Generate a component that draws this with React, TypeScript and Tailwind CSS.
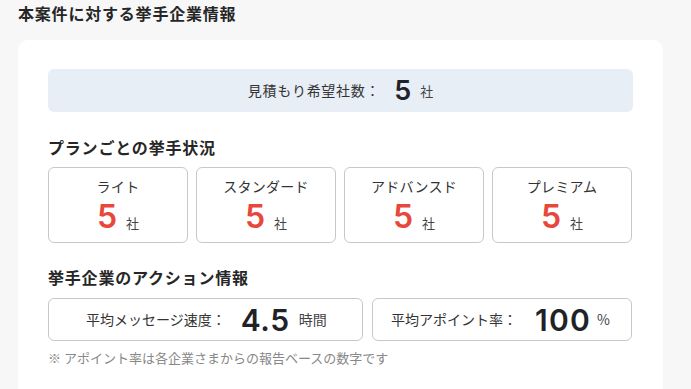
const plans = ["ライト", "スタンダード", "アドバンスド", "プレミアム"];

const jp = "font-['Noto_Sans_CJK_JP','Noto_Sans',sans-serif]";
const num = "font-['Inter','Noto_Sans',sans-serif]";

export default function App() {
  return (
    <div className={`min-h-[389px] bg-[#f7f7f8] pl-[18px] pt-[2px] ${jp}`}>
      <h2 className="text-[16px] leading-[22px] font-bold tracking-[0.05em] text-[#262626]">
        本案件に対する挙手企業情報
      </h2>
      <div className="mt-[16px] w-[645px] rounded-[10px] bg-white px-[30px] pt-[29px] pb-[40px]">
        <div className="flex h-[43px] w-[585px] items-center justify-center rounded-[6px] bg-[#e8eef6]">
          <span className="text-[14px] tracking-[0.05em] text-[#333]">見積もり希望社数：</span>
          <span className={`ml-[14px] text-[27px] leading-none font-semibold text-[#1f2328] ${num}`}>5</span>
          <span className="ml-[9px] text-[13px] text-[#444]">社</span>
        </div>

        <h3 className="mt-[24px] text-[16px] leading-[22px] font-bold tracking-[0.05em] text-[#262626]">
          プランごとの挙手状況
        </h3>
        <div className="mt-[9px] flex gap-[8px]">
          {plans.map((p) => (
            <div
              key={p}
              className="flex h-[76px] w-[140px] flex-col items-center rounded-[6px] border border-[#c8c8cc] pt-[8px]"
            >
              <span className="text-[14px] leading-[20px] tracking-[0.02em] text-[#333]">{p}</span>
              <div className="mt-[3px] flex items-baseline">
                <span className={`text-[32px] leading-[35px] font-semibold text-[#e8483b] ${num}`}>5</span>
                <span className="ml-[9px] text-[13px] text-[#444]">社</span>
              </div>
            </div>
          ))}
        </div>

        <h3 className="mt-[23px] text-[16px] leading-[22px] font-bold tracking-[0.05em] text-[#262626]">
          挙手企業のアクション情報
        </h3>
        <div className="mt-[10px] flex gap-[9px]">
          <div className="flex h-[43px] w-[315px] items-center rounded-[6px] border border-[#c8c8cc] pl-[37px]">
            <span className="text-[14px] text-[#333]">平均メッセージ速度：</span>
            <span className={`ml-[15px] text-[30px] leading-none font-semibold tracking-[0.02em] text-[#1f2328] ${num}`}>4.5</span>
            <span className="ml-[9px] text-[14px] text-[#444]">時間</span>
          </div>
          <div className="flex h-[43px] w-[260px] items-center rounded-[6px] border border-[#c8c8cc] pl-[18px]">
            <span className="text-[14px] text-[#333]">平均アポイント率：</span>
            <span className={`ml-[18px] text-[30px] leading-none font-semibold tracking-[0.04em] text-[#1f2328] ${num}`}>100</span>
            <span className="ml-[6px] text-[14px] text-[#444]">%</span>
          </div>
        </div>
        <p className="mt-[8px] text-[13px] leading-[18px] text-[#888]">
          ※ アポイント率は各企業さまからの報告ベースの数字です
        </p>
      </div>
    </div>
  );
}
